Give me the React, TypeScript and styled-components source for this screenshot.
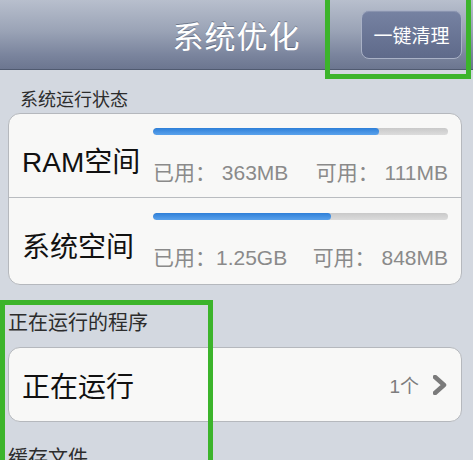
import React from 'react';
import styled, { createGlobalStyle } from 'styled-components';

const GlobalStyle = createGlobalStyle`
  html, body {
    margin: 0;
    padding: 0;
    background: #d3d8e0;
  }
  body {
    font-family: "Liberation Sans", "Noto Sans CJK SC", sans-serif;
  }
`;

const Page = styled.div`
  position: relative;
  width: 473px;
  height: 460px;
  overflow: hidden;
  background: #d3d8e0;
`;

const NavBar = styled.div`
  height: 70px;
  display: grid;
  grid-template-columns: 1fr auto 1fr;
  align-items: center;
  background: linear-gradient(#b8bfcd 0%, #9aa3b6 45%, #7a849d 80%, #6c7690 100%);
  border-bottom: 1px solid #505a70;
  box-sizing: border-box;
`;

const NavTitle = styled.h1`
  grid-column: 2;
  margin: 0;
  font-family: "Noto Sans CJK SC", sans-serif;
  font-size: 31px;
  font-weight: 400;
  color: #ffffff;
  letter-spacing: 1px;
  text-shadow: 0 -1px 0 rgba(60, 70, 90, 0.5);
`;

const NavButton = styled.button`
  grid-column: 3;
  justify-self: end;
  margin-right: 11px;
  width: 101px;
  height: 49px;
  border-radius: 8px;
  border: 1px solid #a9b1c6;
  background: linear-gradient(#7682a2, #5f6a8a);
  color: #ffffff;
  font-family: "Noto Sans CJK SC", sans-serif;
  font-size: 19px;
  padding: 0;
  box-shadow: inset 0 1px 0 rgba(255, 255, 255, 0.15);
`;

const SectionLabel = styled.div<{ $indent: number; $size: number; $top: number }>`
  padding: ${(p) => p.$top}px 0 0 ${(p) => p.$indent}px;
  height: 30px;
  line-height: 30px;
  font-family: "Noto Sans CJK SC", sans-serif;
  font-size: ${(p) => p.$size}px;
  color: #2c2c2c;
`;

const Card = styled.div<{ $gap?: number }>`
  margin: ${(p) => p.$gap ?? 0}px 11px 0 8px;
  background: #f8f8f7;
  border: 1px solid #b5b8bd;
  border-radius: 12px;
  overflow: hidden;
`;

const StatRow = styled.div<{ $height: number }>`
  display: flex;
  align-items: center;
  height: ${(p) => p.$height}px;
  padding: 0 13px 0 13px;
  & + & {
    border-top: 1px solid #b9bcc0;
  }
`;

const RowTitle = styled.div`
  width: 131px;
  flex: none;
  font-family: "Liberation Sans", "Noto Sans CJK SC", sans-serif;
  font-size: 28px;
  color: #111;
  padding-top: 8px;
`;

const StatBody = styled.div`
  flex: 1;
  display: flex;
  flex-direction: column;
  gap: 21px;
  padding-top: 2px;
`;

const Track = styled.div`
  height: 7px;
  border-radius: 4px;
  background: linear-gradient(#c9c9c9, #dcdcdc);
  overflow: hidden;
`;

const Fill = styled.div`
  height: 100%;
  border-radius: 4px;
  background: linear-gradient(#2e7fd8, #5aa2ec);
`;

const StatLine = styled.div`
  display: flex;
  justify-content: space-between;
  font-family: "Liberation Sans", "Noto Sans CJK SC", sans-serif;
  font-size: 21px;
  color: #8a8a8a;
`;

const LinkRow = styled.div`
  display: flex;
  align-items: center;
  height: 73px;
  padding: 0 14px 0 13px;
`;

const LinkTitle = styled.div`
  flex: 1;
  font-family: "Noto Sans CJK SC", sans-serif;
  font-size: 28px;
  color: #111;
`;

const LinkValue = styled.span`
  font-family: "Liberation Sans", "Noto Sans CJK SC", sans-serif;
  font-size: 19px;
  color: #7d7d7d;
  margin-right: 14px;
`;

const Highlight = styled.div<{ $x: number; $y: number; $w: number; $h: number }>`
  position: absolute;
  left: ${(p) => p.$x}px;
  top: ${(p) => p.$y}px;
  width: ${(p) => p.$w}px;
  height: ${(p) => p.$h}px;
  border: 5px solid #3cb42b;
  box-sizing: border-box;
  pointer-events: none;
`;

const Chevron = () => (
  <svg width="14" height="20" viewBox="0 0 14 20">
    <path d="M2 2 L11 10 L2 18" fill="none" stroke="#7b7b7b" strokeWidth="4.5" strokeLinecap="round" strokeLinejoin="round" />
  </svg>
);

const stats = [
  { name: 'RAM空间', used: '已用： 363MB', free: '可用： 111MB', pct: 76.5, height: 83 },
  { name: '系统空间', used: '已用：1.25GB', free: '可用： 848MB', pct: 60.5, height: 86 },
];

const App: React.FC = () => {
  return (
    <Page>
      <GlobalStyle />
      <NavBar>
        <NavTitle>系统优化</NavTitle>
        <NavButton>一键清理</NavButton>
      </NavBar>

      <SectionLabel $indent={20} $size={18} $top={13}>系统运行状态</SectionLabel>
      <Card>
        {stats.map((s) => (
          <StatRow key={s.name} $height={s.height}>
            <RowTitle>{s.name}</RowTitle>
            <StatBody>
              <Track>
                <Fill style={{ width: `${s.pct}%` }} />
              </Track>
              <StatLine>
                <span>{s.used}</span>
                <span>{s.free}</span>
              </StatLine>
            </StatBody>
          </StatRow>
        ))}
      </Card>

      <SectionLabel $indent={8} $size={20} $top={22}>正在运行的程序</SectionLabel>
      <Card $gap={10}>
        <LinkRow>
          <LinkTitle>正在运行</LinkTitle>
          <LinkValue>1个</LinkValue>
          <Chevron />
        </LinkRow>
      </Card>

      <SectionLabel $indent={8} $size={20} $top={20}>缓存文件</SectionLabel>

      <Highlight $x={325} $y={-6} $w={146} $h={85} />
      <Highlight $x={0} $y={300} $w={213} $h={170} />
    </Page>
  );
};

export default App;
